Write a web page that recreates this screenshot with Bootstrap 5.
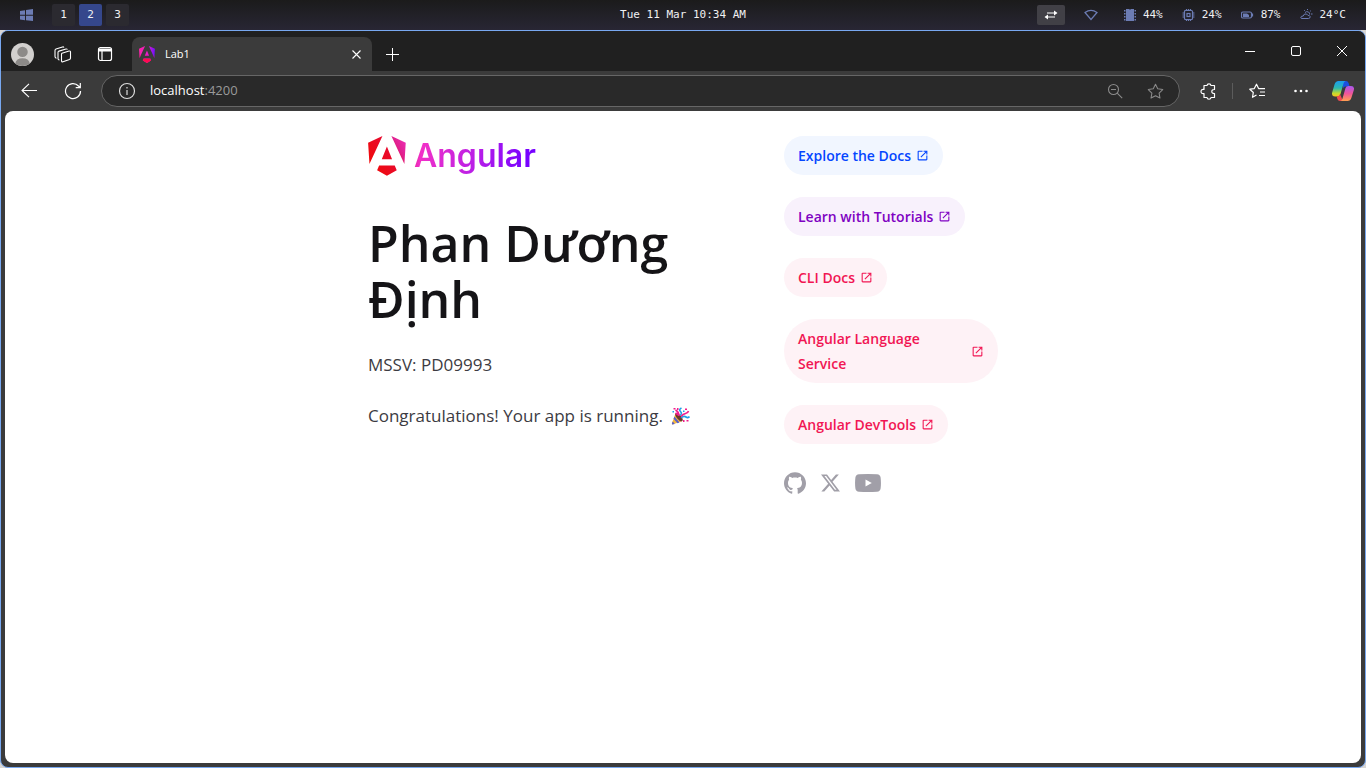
<!DOCTYPE html>
<html lang="en">
<head>
<meta charset="utf-8">
<meta name="viewport" content="width=device-width, initial-scale=1">
<title>Lab1</title>
<link href="https://cdn.jsdelivr.net/npm/bootstrap@5.3.0/dist/css/bootstrap.min.css" rel="stylesheet">
<style>
  body { font-family: "Open Sans", "Noto Sans", sans-serif; background: #d8d6d4; }
  svg { display: block; flex: none; }
  button { border: 0; background: none; padding: 0; color: inherit; }

  .sysbar { height: 30px; padding: 0 20px; background: linear-gradient(#1b1b1b, #282634); color: #f0f0f2; font: 11px/16px "DejaVu Sans Mono", monospace; }
  .sysbar .side { flex: 1 1 0; }
  .start-logo { margin-right: 18px; }
  .space { width: 23px; height: 22px; border-radius: 2px; background: #2b2a30; }
  .space.active { background: #35478c; }
  .swap { width: 28px; height: 20px; border-radius: 2px; background: #414046; color: #fff; }
  .stats { gap: 19px; }
  .stat { gap: 6px; }
  .stat svg, .wifi { color: #6c7cb4; }
  .wifi { margin-right: 6px; }

  .window { border: 1px solid #78a8f0; border-radius: 8px; background: #3b3b3b; overflow: hidden; color: #fff; }
  .tabstrip { height: 40px; padding-left: 1px; background: #202020; }
  .strip-btn { width: 41px; height: 34px; }
  .tab { width: 240px; height: 34px; margin-left: 7px; padding: 0 11px 0 7px; border-radius: 8px 8px 0 0; background: #3b3b3b; font-size: 11px; gap: 10px; }
  .ctl { width: 46px; height: 40px; }
  .toolbar { height: 40px; padding: 0 3px 0 6px; }
  .tool-btn { width: 44px; height: 32px; }
  .tool-btn.copilot { width: 39px; }
  .address { height: 32px; margin: 0 6px; padding: 0 15px 0 16px; border: 1px solid #666; border-radius: 16px; background: #292929; font-size: 13px; }
  .address a { color: #fff; margin-left: 14px; }
  .address a span { color: #9a9a9a; }
  .address button { color: #8a8a8a; }
  .divide { width: 1px; height: 16px; margin: 0 2px; background: #5c5c5c; }

  .page { margin: 0 4px 4px; padding: 25px 16px; border-radius: 8px; background: #fff; color: #3c3b42; }
  .content { max-width: 630px; gap: 36px; }
  .resources { flex: 0 0 214px; }
  .brand-name { margin-left: 8px; font: 600 32px/40px Inter, sans-serif; background: linear-gradient(100deg, #e0208c, #f130c8 8%, #b81ee8 52%, #7702ff 90%); -webkit-background-clip: text; background-clip: text; color: transparent; }
  h1 { margin: 39px 0 0; font-size: 50px; line-height: 56px; font-weight: 600; color: #151417; }
  .content p { margin: 24px 0 0; font-size: 17px; line-height: 27px; }
  .pills { gap: 22px; }
  .pill { padding: 7px 14px; border-radius: 40px; gap: 5px; font-size: 14px; line-height: 25px; font-weight: 600; text-decoration: none; }
  .pill.blue { color: #0546ff; background: #f1f6ff; }
  .pill.violet { color: #7f02c2; background: #f8f1fc; }
  .pill.rose { color: #f11653; background: #fef2f6; }
  .social { margin-top: 28px; gap: 15px; }
  .social a { color: #a19fa8; }
</style>
</head>
<body class="d-flex flex-column min-vh-100">
<svg width="0" height="0" class="position-absolute" aria-hidden="true">
  <defs>
    <linearGradient id="gRed" x1="0" y1=".6" x2="1" y2="0"><stop offset="0" stop-color="#f00a0a"/><stop offset=".55" stop-color="#e80a30"/><stop offset=".72" stop-color="#e0208c"/><stop offset="1" stop-color="#f030c0"/></linearGradient>
    <linearGradient id="gPink" x1="0" y1=".2" x2="1" y2=".3"><stop offset="0" stop-color="#ff22a8"/><stop offset=".55" stop-color="#e81cc8"/><stop offset="1" stop-color="#6b10ff"/></linearGradient>
    <linearGradient id="gLow" x1="0" y1="0" x2="0" y2="1"><stop offset=".5" stop-color="#ff0a50" stop-opacity="0"/><stop offset=".8" stop-color="#ff0a50"/></linearGradient>
    <linearGradient id="gCopA" x1="0" y1="0" x2="0" y2="1"><stop offset="0" stop-color="#1b9cf0"/><stop offset=".45" stop-color="#2cb8b0"/><stop offset=".8" stop-color="#c6d92c"/><stop offset="1" stop-color="#f8c020"/></linearGradient>
    <linearGradient id="gCopB" x1="0" y1="0" x2="0" y2="1"><stop offset="0" stop-color="#a858f0"/><stop offset=".5" stop-color="#f0559a"/><stop offset="1" stop-color="#ffa050"/></linearGradient>
    <path id="shield" d="m222.077 39.192-8.019 125.923L137.387 0l84.69 39.192Zm-53.105 162.825-57.933 33.056-57.934-33.056 11.783-28.556h92.301l11.783 28.556ZM111.039 62.675l30.357 73.803H80.681l30.358-73.803ZM7.937 165.115 0 39.192 84.69 0 7.937 165.115Z"/>
    <path id="open" fill="currentColor" d="M200-120q-33 0-56.5-23.5T120-200v-560q0-33 23.5-56.5T200-840h280v80H200v560h560v-280h80v280q0 33-23.5 56.5T760-120H200Zm188-212-56-56 372-372H560v-80h280v280h-80v-144L388-332Z"/>
    <path id="star" d="M8 1.200l2.100 4.300 4.700.7-3.400 3.300.8 4.700L8 12l-4.200 2.200.8-4.700L1.200 6.200l4.700-.7z" fill="none" stroke="currentColor" stroke-linejoin="round"/>
  </defs>
</svg>

<header class="sysbar d-flex align-items-center">
  <div class="side d-flex align-items-center">
    <button class="start-logo" aria-label="Start"><svg width="14" height="14" viewBox="0 0 14 14" fill="#6c7cb4"><path d="M0 3l5-.8v4.600H0zM6 2l7-1v5.800H6zM0 7.800h5v4.400L0 11.500zM6 7.800h7V13l-7-.8z"/></svg></button>
    <div class="d-flex gap-1"><button class="space">1</button><button class="space active">2</button><button class="space">3</button></div>
  </div>
  <time>Tue 11 Mar 10:34 AM</time>
  <div class="side stats d-flex align-items-center justify-content-end">
    <button class="swap d-flex align-items-center justify-content-center" aria-label="Swap layout"><svg width="14" height="10" viewBox="0 0 14 10" fill="none" stroke="currentColor" stroke-width="1.200"><path d="M3 3h9M2 7h9"/><path d="M10 .5L13.500 3 10 5.500zM4 4.500L.5 7 4 9.500z" fill="currentColor" stroke="none"/></svg></button>
    <svg class="wifi" width="14" height="12" viewBox="0 0 14 12" fill="none" stroke="currentColor" stroke-width="1.200"><path d="M1 3.500Q7-.8 13 3.500L7 10.500z"/></svg>
    <div class="stat d-flex align-items-center"><svg width="14" height="12" viewBox="0 0 14 12" fill="currentColor"><path d="M3 0h3q1 1 2 0h3v12H3zM1 1h1.500v1.500H1zM1 4h1.500v1.500H1zM1 7h1.500v1.500H1zM1 10h1.500v1.500H1zM11.500 1H13v1.500h-1.500zM11.500 4H13v1.500h-1.500zM11.500 7H13v1.500h-1.500zM11.500 10H13v1.500h-1.500z"/></svg>44%</div>
    <div class="stat d-flex align-items-center"><svg width="14" height="12" viewBox="0 0 14 12" fill="none" stroke="currentColor" stroke-width="1.200"><rect x="2.500" y="1.500" width="8" height="9" rx="1"/><rect x="5" y="4.500" width="3" height="3"/><path d="M4.500 0v2M6.500 0v2M8.500 0v2M4.500 10v2M6.500 10v2M8.500 10v2M.5 4h2M.5 6h2M.5 8h2M10.500 4h2M10.500 6h2M10.500 8h2"/></svg>24%</div>
    <div class="stat d-flex align-items-center"><svg width="14" height="12" viewBox="0 0 14 12" fill="none" stroke="currentColor" stroke-width="1.200"><rect x=".5" y="3" width="10" height="6" rx="1.500"/><path d="M11.500 4.500v3"/><path d="M2 4.500h4l2 1.500v2H2z" fill="currentColor" stroke="none"/></svg>87%</div>
    <div class="stat d-flex align-items-center"><svg width="14" height="12" viewBox="0 0 14 12" fill="none" stroke="currentColor"><path d="M2 9.500h6.500q2-.2 1.600-2-.5-1.300-2-1Q7 4.500 5 5 3.300 5.500 3.300 7 1 7 .8 8.300.8 9.500 2 9.500zM5 3.500Q6.500 2 8.500 3 10 4 9.600 5.500M7.500 0v1M11 1.500l-.8.8M4 1l.8.8M11 5h1.500"/></svg>24°C</div>
  </div>
</header>

<div class="window flex-grow-1 d-flex flex-column">
  <div class="tabstrip d-flex align-items-end">
    <button class="strip-btn d-flex align-items-center justify-content-center" aria-label="Profile"><svg width="23" height="23" viewBox="0 0 22 22"><circle cx="11" cy="11" r="11" fill="#d2d0ce"/><circle cx="11" cy="8.500" r="5" fill="#8c8a88"/><path d="M4 19.500Q5 14.500 11 14.500T18 19.500Q15 22 11 22T4 19.500z" fill="#8c8a88"/></svg></button>
    <button class="strip-btn d-flex align-items-center justify-content-center" aria-label="Workspaces"><svg width="19" height="18" viewBox="0 0 19 18" fill="none" stroke="#fff" stroke-width="1.100" stroke-linejoin="round"><path d="M8 8.300L15 6q1.500-.2 1.500 1v6q0 1-1 1.500L9 16.800q-1.500.3-1.500-1V9.300q0-.8.5-1zM5.500 15q-1.500-.2-1.500-1.500V7.500q0-1 1-1.400L12 4q1-.2 1.500.5M2.500 13.200Q1 13 1 11.500V5.500q0-1 1-1.400L8.500 2q1-.3 1.500.5"/></svg></button>
    <button class="strip-btn d-flex align-items-center justify-content-center" aria-label="Tab actions"><svg width="16" height="16" viewBox="0 0 16 16" fill="none" stroke="#fff" stroke-width="1.200"><rect x="1.500" y="1.500" width="13" height="13" rx="2"/><path d="M1.500 4h13" stroke-width="3"/><path d="M5 4v10.500"/></svg></button>
    <div class="tab d-flex align-items-center">
      <svg width="16" height="17" viewBox="0 0 223 236"><use href="#shield" fill="url(#gPink)"/><use href="#shield" fill="url(#gLow)"/></svg>
      <span class="flex-grow-1">Lab1</span>
      <button aria-label="Close tab"><svg width="9" height="9" viewBox="0 0 9 9" stroke="#fff" stroke-width="1.100"><path d="M.5.5l8 8M8.500.5l-8 8"/></svg></button>
    </div>
    <button class="strip-btn d-flex align-items-center justify-content-center" aria-label="New tab"><svg width="15" height="15" viewBox="0 0 15 15" stroke="#fff"><path d="M7.500 1v13M1 7.500h13"/></svg></button>
    <div class="ms-auto d-flex">
      <button class="ctl d-flex align-items-center justify-content-center" aria-label="Minimize"><svg width="10" height="10" viewBox="0 0 10 10" stroke="#fff"><path d="M0 5.500h10"/></svg></button>
      <button class="ctl d-flex align-items-center justify-content-center" aria-label="Maximize"><svg width="10" height="10" viewBox="0 0 10 10" fill="none" stroke="#fff"><rect x=".5" y=".5" width="9" height="9" rx="1.500"/></svg></button>
      <button class="ctl d-flex align-items-center justify-content-center" aria-label="Close"><svg width="10" height="10" viewBox="0 0 10 10" stroke="#fff"><path d="M0 0l10 10M10 0L0 10"/></svg></button>
    </div>
  </div>

  <nav class="toolbar d-flex align-items-center">
    <button class="tool-btn d-flex align-items-center justify-content-center" aria-label="Back"><svg width="16" height="16" viewBox="0 0 16 16" fill="none" stroke="#fff" stroke-width="1.100"><path d="M16 7.500H1M8 .8L1 7.500l7 6.700"/></svg></button>
    <button class="tool-btn d-flex align-items-center justify-content-center" aria-label="Reload"><svg width="18" height="18" viewBox="0 0 18 18" fill="none" stroke="#fff" stroke-width="1.200"><path d="M16.500 9A7.500 7.500 0 1 1 14.500 4L16 5.500M16.300 1v4.700h-4.600"/></svg></button>
    <div class="address flex-grow-1 d-flex align-items-center">
      <svg width="18" height="18" viewBox="0 0 18 18" fill="none" stroke="#ddd" stroke-width="1.200"><circle cx="9" cy="9" r="7.500"/><path d="M9 8v5M9 5v1.500"/></svg>
      <a href="#" class="text-decoration-none flex-grow-1">localhost<span>:4200</span></a>
      <button aria-label="Zoom" class="me-4"><svg width="16" height="16" viewBox="0 0 16 16" fill="none" stroke="currentColor" stroke-width="1.100"><circle cx="6.500" cy="6.500" r="5"/><path d="M10.200 10.200l5 5M4 6.500h5"/></svg></button>
      <button aria-label="Add favorite"><svg width="17" height="17" viewBox="0 0 16 16"><use href="#star"/></svg></button>
    </div>
    <button class="tool-btn d-flex align-items-center justify-content-center" aria-label="Extensions"><svg width="17" height="17" viewBox="0 0 17 17" fill="none" stroke="#fff" stroke-width="1.200" stroke-linejoin="round"><path d="M4 2.500h3Q7.200.8 9 .8t2 1.700h3.500v4q-2.700-.2-2.700 2t2.700 2v4H11q-.2 1.700-2 1.700t-2-1.700H4v-4Q1 10.800 1 8.500t3-2z"/></svg></button>
    <div class="divide"></div>
    <button class="tool-btn d-flex align-items-center justify-content-center" aria-label="Favorites"><svg width="17" height="16" viewBox="0 0 17 16" fill="none" stroke="#fff" stroke-width="1.200" stroke-linejoin="round"><path d="M7.500 12L3.500 14.300l.8-4.800L.8 6.200l4.500-.6L7.500 1.200 9.600 5.600h6.400M11 9h5M10 12.500h6"/></svg></button>
    <button class="tool-btn d-flex align-items-center justify-content-center" aria-label="More"><svg width="14" height="4" viewBox="0 0 14 4" fill="#fff"><circle cx="1.500" cy="2" r="1.300"/><circle cx="7" cy="2" r="1.300"/><circle cx="12.500" cy="2" r="1.300"/></svg></button>
    <button class="tool-btn copilot d-flex align-items-center justify-content-center" aria-label="Copilot"><svg width="22" height="20" viewBox="0 0 22 20"><path d="M11 0h3q2 0 2.600 2l1 3.500h-4q-2 0-2.600 2z" fill="#1a50e0"/><path d="M6.500 0h7q-1.500.5-2 2.500L8.500 13q-.8 2.500-3 2.500H3q-4 0-2.700-4.500L2.500 3.500Q3.500 0 6.500 0z" fill="url(#gCopA)"/><path d="M11 20H8q-2 0-2.600-2l-.7-2.500q2.500 0 3.300-2.500z" fill="#f04a50"/><path d="M15.500 20h-7q1.500-.5 2-2.500L13.500 7q.7-2 3-2H19q4 0 2.700 4.500l-2.200 7Q18.500 20 15.500 20z" fill="url(#gCopB)"/></svg></button>
  </nav>

  <main class="page flex-grow-1">
    <div class="content d-flex mx-auto">
      <section class="flex-grow-1">
        <div class="d-flex">
          <svg width="38" height="40" viewBox="0 0 223 236" aria-hidden="true"><use href="#shield" fill="url(#gRed)"/></svg>
          <span class="brand-name">Angular</span>
        </div>
        <h1>Phan Dương Định</h1>
        <p>MSSV: PD09993</p>
        <p class="d-flex align-items-center">Congratulations! Your app is running.
          <svg class="ms-2" width="19" height="18" viewBox="0 0 19 18" role="img" aria-label="Party popper"><path d="M4.500 6.500Q9 8 11.500 14L1.500 17.500Q.5 17.500 1 16z" fill="#f5b83d"/><path d="M3.500 9.500l5 6-2 .7-4-4.500zM1.800 14.500l2 2.500-2.300.5q-.9-.2-.5-1.500z" fill="#5a5fc8"/><ellipse cx="8" cy="10.200" rx="2.200" ry="5" transform="rotate(-40 8 10.200)" fill="#6b3b2c"/><path d="M8 9Q8 5 4.500 3M4.500 6l3 2" stroke="#ef1d8c" stroke-width="1.700" fill="none"/><path d="M9 8.500Q11.500 6.500 9.500 4.500t1-3.500M10 11q3-2.500 5-1t3.500-.5" stroke="#1f9fe8" stroke-width="1.600" fill="none"/><path d="M10 9.500Q12 7 14.500 6.500T17.500 4" stroke="#ef1d8c" stroke-width="1.600" fill="none"/><path d="M2.500 1h2v1.500h-2zM6 1h1.500v2H6zM14 1.500h2V3h-2zM15.500 13h2v1.500h-2zM12 13h1.500v2H12z" fill="#ef1d8c"/><path d="M1.500 4h1.500v1.500H1.500zM12 3.500h1.500V5H12z" fill="#1f9fe8"/></svg>
        </p>
      </section>
      <aside class="resources">
        <div class="pills d-flex flex-column align-items-start">
          <a class="pill blue d-flex align-items-center" href="#">Explore the Docs<svg width="13" height="13" viewBox="0 -960 960 960"><use href="#open"/></svg></a>
          <a class="pill violet d-flex align-items-center" href="#">Learn with Tutorials<svg width="13" height="13" viewBox="0 -960 960 960"><use href="#open"/></svg></a>
          <a class="pill rose d-flex align-items-center" href="#">CLI Docs<svg width="13" height="13" viewBox="0 -960 960 960"><use href="#open"/></svg></a>
          <a class="pill rose d-flex align-items-center w-100" href="#"><span class="flex-grow-1">Angular Language Service</span><svg width="13" height="13" viewBox="0 -960 960 960"><use href="#open"/></svg></a>
          <a class="pill rose d-flex align-items-center" href="#">Angular DevTools<svg width="13" height="13" viewBox="0 -960 960 960"><use href="#open"/></svg></a>
        </div>
        <div class="social d-flex align-items-center">
          <a href="#" aria-label="Github"><svg width="22" height="22" viewBox="0 0 24.610 24" fill="currentColor"><path d="M12.3047 0C5.50634 0 0 5.50942 0 12.3047C0 17.7423 3.52529 22.3535 8.41332 23.9787C9.02856 24.0946 9.25414 23.7142 9.25414 23.3871C9.25414 23.0949 9.24389 22.3207 9.23876 21.2953C5.81601 22.0377 5.09414 19.6444 5.09414 19.6444C4.53427 18.2243 3.72524 17.8449 3.72524 17.8449C2.61064 17.082 3.81137 17.0973 3.81137 17.0973C5.04697 17.1835 5.69604 18.3647 5.69604 18.3647C6.79321 20.2463 8.57636 19.7029 9.27978 19.3881C9.39052 18.5924 9.70736 18.0499 10.0591 17.7423C7.32641 17.4347 4.45429 16.3765 4.45429 11.6618C4.45429 10.3185 4.9311 9.22133 5.72065 8.36C5.58222 8.04931 5.16694 6.79833 5.82831 5.10337C5.82831 5.10337 6.85883 4.77319 9.2121 6.36459C10.1965 6.09082 11.2424 5.95546 12.2883 5.94931C13.3342 5.95546 14.3801 6.09082 15.3644 6.36459C17.7023 4.77319 18.7328 5.10337 18.7328 5.10337C19.3942 6.79833 18.9789 8.04931 18.8559 8.36C19.6403 9.22133 20.1171 10.3185 20.1171 11.6618C20.1171 16.3888 17.2409 17.4296 14.5031 17.7321C14.9338 18.1012 15.3337 18.8559 15.3337 20.0084C15.3337 21.6552 15.3183 22.978 15.3183 23.3779C15.3183 23.7009 15.5336 24.0854 16.1642 23.9623C21.0871 22.3484 24.6094 17.7341 24.6094 12.3047C24.6094 5.50942 19.0999 0 12.3047 0Z"/></svg></a>
          <a href="#" aria-label="X"><svg width="19" height="18" viewBox="1.250 2.250 21.600 19.500" fill="currentColor"><path d="M18.244 2.250h3.308l-7.227 8.260 8.502 11.240H16.170l-5.214-6.817L4.990 21.750H1.680l7.730-8.835L1.254 2.250H8.080l4.713 6.231zm-1.161 17.520h1.833L7.084 4.126H5.117z"/></svg></a>
          <a href="#" aria-label="Youtube"><svg width="26" height="18" viewBox="0 0 26 18" fill="currentColor" fill-rule="evenodd"><path d="M4 .3Q13-.3 22 .3q3.200.2 3.600 3.200.7 5.500 0 11-.4 3-3.600 3.200-9 .6-18 0-3.200-.2-3.600-3.200-.7-5.500 0-11Q.8.500 4 .3zM10.500 5.500v7L16.800 9z"/></svg></a>
        </div>
      </aside>
    </div>
  </main>
</div>
<script src="https://cdn.jsdelivr.net/npm/bootstrap@5.3.0/dist/js/bootstrap.bundle.min.js"></script>
</body>
</html>
